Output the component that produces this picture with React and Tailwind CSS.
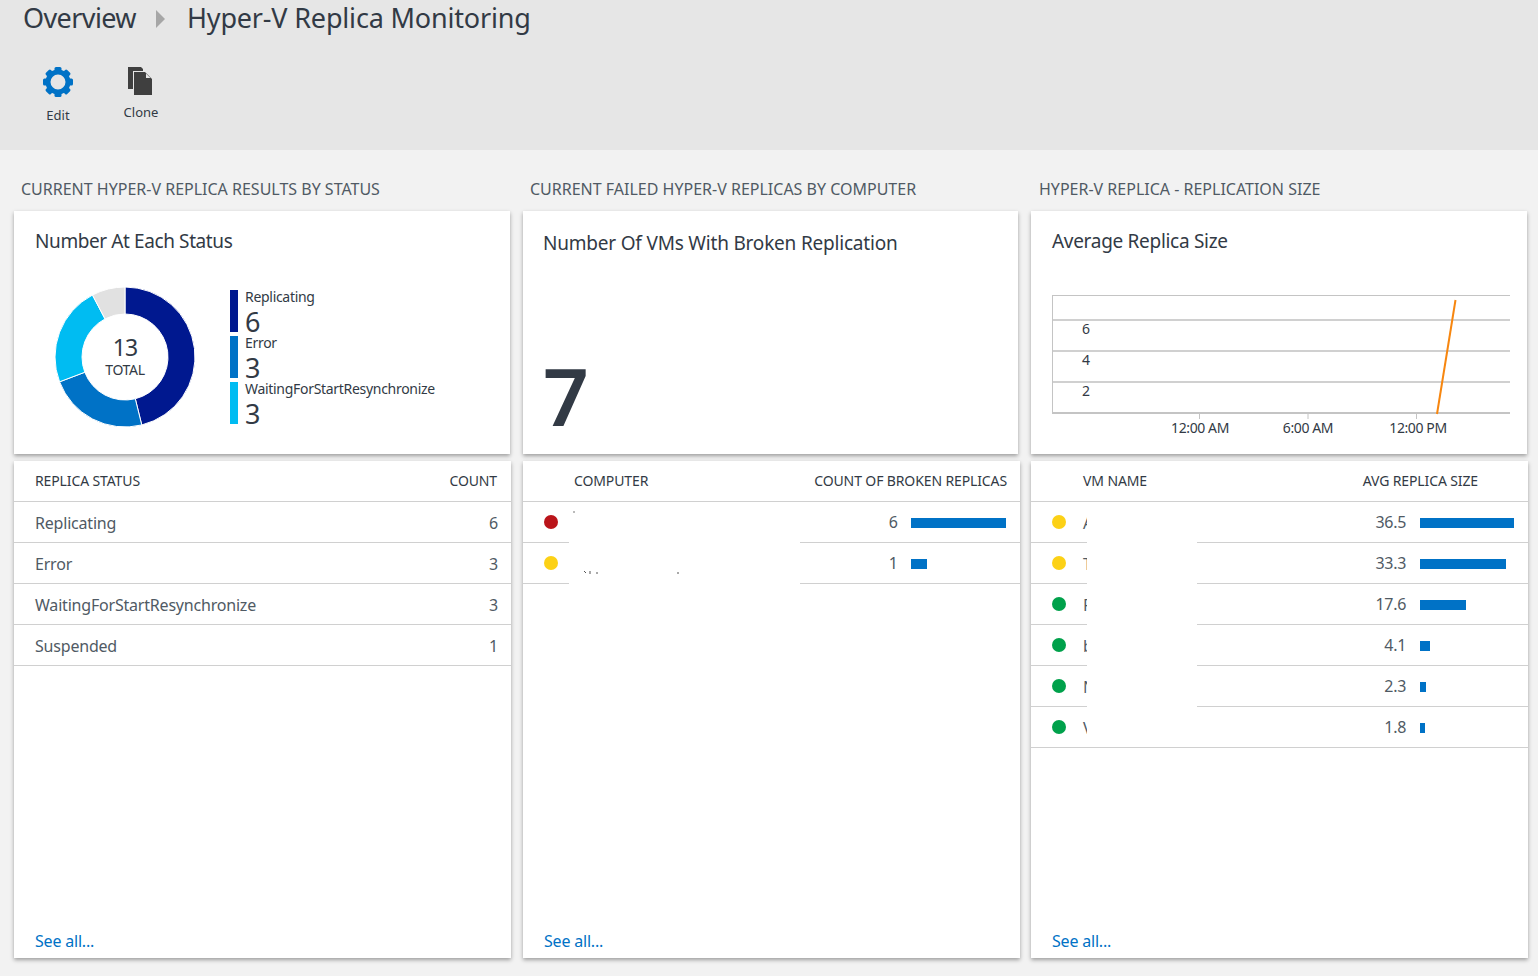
import React from 'react';

const font = { fontFamily: '"Noto Sans", "Open Sans", sans-serif' };

const statusRows = [
  ['Replicating', '6'],
  ['Error', '3'],
  ['WaitingForStartResynchronize', '3'],
  ['Suspended', '1'],
];

const computerRows = [
  { dot: 'bg-[#ba141a]', value: '6', bar: 'w-[95px]' },
  { dot: 'bg-[#fcd116]', value: '1', bar: 'w-[16px]' },
];

const vmRows = [
  { dot: 'bg-[#fcd116]', name: 'A', value: '36.5', bar: 'w-[94px]' },
  { dot: 'bg-[#fcd116]', name: 'T', value: '33.3', bar: 'w-[86px]' },
  { dot: 'bg-[#00a14b]', name: 'F', value: '17.6', bar: 'w-[46px]' },
  { dot: 'bg-[#00a14b]', name: 'b', value: '4.1', bar: 'w-[10px]' },
  { dot: 'bg-[#00a14b]', name: 'N', value: '2.3', bar: 'w-[6px]' },
  { dot: 'bg-[#00a14b]', name: 'V', value: '1.8', bar: 'w-[5px]' },
];

const segments = [
  { value: 6, color: '#00188f' },
  { value: 3, color: '#0072c6' },
  { value: 3, color: '#00bcf2' },
  { value: 1, color: '#e1e1e1' },
];

function arcPath(start, end, r, R) {
  const pt = (rad, a) => [70 + rad * Math.sin(a), 70 - rad * Math.cos(a)];
  const [x1, y1] = pt(R, start);
  const [x2, y2] = pt(R, end);
  const [x3, y3] = pt(r, end);
  const [x4, y4] = pt(r, start);
  const large = end - start > Math.PI ? 1 : 0;
  return `M${x1} ${y1}A${R} ${R} 0 ${large} 1 ${x2} ${y2}L${x3} ${y3}A${r} ${r} 0 ${large} 0 ${x4} ${y4}Z`;
}

function Donut() {
  let angle = 0;
  return (
    <div className="relative w-[140px] h-[140px]">
      <svg width="140" height="140" viewBox="0 0 140 140">
        {segments.map((s) => {
          const start = angle;
          angle += (s.value / 13) * Math.PI * 2;
          return <path key={s.color} d={arcPath(start, angle, 43, 70)} fill={s.color} stroke="#fff" strokeWidth="1" />;
        })}
      </svg>
      <div className="absolute inset-0 flex flex-col items-center justify-center text-[#323a45] -mt-[4px]">
        <span className="text-[23px] leading-[28px] tracking-[-1px] mt-[2px]">13</span>
        <span className="text-[14px] leading-[18px] tracking-[-0.3px]">TOTAL</span>
      </div>
    </div>
  );
}

function LegendItem({ color, label, value }) {
  return (
    <div className="flex h-[42px] gap-[7px]">
      <div className={`w-[8px] h-[42px] ${color}`} />
      <div className="flex flex-col text-[#323a45]">
        <span className="text-[14px] leading-[14px] tracking-[-0.3px]">{label}</span>
        <span className="text-[27px] leading-[26px] mt-[5px]">{value}</span>
      </div>
    </div>
  );
}

function LineChart() {
  return (
    <svg width="470" height="150" viewBox="0 0 470 150" className="block">
      <g stroke="#d0d0d0" strokeWidth="2">
        <line x1="0" y1="29" x2="458" y2="29" />
        <line x1="0" y1="60" x2="458" y2="60" />
        <line x1="0" y1="91" x2="458" y2="91" />
      </g>
      <line x1="0" y1="4.5" x2="458" y2="4.5" stroke="#c4c4c4" strokeWidth="1" />
      <line x1="0.5" y1="4" x2="0.5" y2="123" stroke="#c4c4c4" strokeWidth="1" />
      <line x1="0" y1="122" x2="458" y2="122" stroke="#c4c4c4" strokeWidth="2" />
      <g stroke="#c4c4c4" strokeWidth="1">
        <line x1="147.5" y1="123" x2="147.5" y2="128" />
        <line x1="256" y1="123" x2="256" y2="128" />
        <line x1="364.5" y1="123" x2="364.5" y2="128" />
      </g>
      <line x1="385" y1="123" x2="403.5" y2="9" stroke="#f7860f" strokeWidth="2" />
      <g fill="#323a45" fontSize="14" style={font}>
        <text x="30" y="43">6</text>
        <text x="30" y="74">4</text>
        <text x="30" y="105">2</text>
      </g>
      <g fill="#323a45" fontSize="14" textAnchor="middle" letterSpacing="-0.4" style={font}>
        <text x="148" y="142">12:00 AM</text>
        <text x="256" y="142">6:00 AM</text>
        <text x="366" y="142">12:00 PM</text>
      </g>
    </svg>
  );
}

function GearIcon() {
  const angles = [0, 45, 90, 135, 180, 225, 270, 315];
  return (
    <svg width="32" height="32" viewBox="0 0 32 32">
      <g fill="#0072c6">
        {angles.map((a) => (
          <rect key={a} x="12.5" y="1" width="7" height="7" rx="1.5" transform={`rotate(${a} 16 16)`} />
        ))}
      </g>
      <circle cx="16" cy="16" r="10" fill="none" stroke="#0072c6" strokeWidth="5" />
    </svg>
  );
}

function CloneIcon() {
  return (
    <svg width="32" height="30" viewBox="0 0 32 30">
      <path d="M3 2H16L18 4V6H8V24H3Z" fill="#3f3f3f" />
      <path d="M9 7H20L27 14V30H9Z" fill="#3f3f3f" />
      <path d="M21 8.5L25.5 13H21Z" fill="#e6e6e6" />
    </svg>
  );
}

function Card({ className = '', children }) {
  return (
    <div className={`bg-white shadow-[0_2px_4px_rgba(0,0,0,0.35)] ${className}`}>{children}</div>
  );
}

function SeeAll() {
  return (
    <a className="absolute left-[21px] bottom-[6px] text-[16px] leading-[22px] text-[#0072c6] tracking-[-0.2px]">See all...</a>
  );
}

function HeadCell({ className = '', children }) {
  return <span className={`text-[14px] leading-[20px] text-[#323a45] tracking-[-0.12px] ${className}`}>{children}</span>;
}

function Row({ children }) {
  return <div className="h-[41px] flex items-center border-b border-[#d0d0d0]">{children}</div>;
}

export default function App() {
  return (
    <div className="w-[1538px] h-[976px] overflow-hidden bg-[#f2f2f2]" style={font}>
      {/* Top bar */}
      <header className="h-[150px] bg-[#e6e6e6]">
        <div className="h-[36px] flex items-center pl-[23px] text-[27px] text-[#323a45]">
          <span className="tracking-[-0.6px]">Overview</span>
          <svg width="10" height="18" viewBox="0 0 10 18" className="ml-[20px] mr-[21px] mt-[2px]">
            <path d="M0 0L9 9L0 18Z" fill="#a6a6a6" />
          </svg>
          <span className="tracking-[-0.18px]">Hyper-V Replica Monitoring</span>
        </div>
        <div className="flex pl-[38px] pt-[30px]">
          <div className="flex flex-col items-center w-[40px]">
            <GearIcon />
            <span className="text-[13px] leading-[18px] mt-[8px] text-[#323a45]">Edit</span>
          </div>
          <div className="flex flex-col items-center w-[40px] ml-[43px] -mt-[1px]">
            <CloneIcon />
            <span className="text-[13px] leading-[18px] mt-[8px] text-[#323a45]">Clone</span>
          </div>
        </div>
      </header>

      <main className="flex pl-[14px]">
        {/* Status column */}
        <section className="w-[497px] mr-[12px]">
          <h2 className="h-[61px] pt-[27px] pl-[7px] text-[16px] leading-[24px] text-[#505a64]">CURRENT HYPER-V REPLICA RESULTS BY STATUS</h2>
          <Card className="h-[243px] w-[496px] pl-[21px] pt-[18px]">
            <h3 className="text-[19px] leading-[25px] text-[#323a45] tracking-[-0.4px]">Number At Each Status</h3>
            <div className="flex mt-[33px] pl-[20px]">
              <Donut />
              <div className="ml-[35px] mt-[3px] flex flex-col gap-[4px]">
                <LegendItem color="bg-[#00188f]" label="Replicating" value="6" />
                <LegendItem color="bg-[#0072c6]" label="Error" value="3" />
                <LegendItem color="bg-[#00bcf2]" label="WaitingForStartResynchronize" value="3" />
              </div>
            </div>
          </Card>
          <Card className="relative h-[497px] mt-[7px]">
            <div className="h-[41px] flex items-center justify-between pl-[21px] pr-[14px] border-b border-[#d0d0d0]">
              <HeadCell>REPLICA STATUS</HeadCell>
              <HeadCell>COUNT</HeadCell>
            </div>
            {statusRows.map(([label, count]) => (
              <Row key={label}>
                <div className="flex-1 flex justify-between pl-[21px] pr-[13px] pt-[1px] text-[16px] text-[#505a64] tracking-[-0.2px]">
                  <span>{label}</span>
                  <span>{count}</span>
                </div>
              </Row>
            ))}
            <SeeAll />
          </Card>
        </section>

        {/* Failed replicas column */}
        <section className="w-[497px] mr-[11px]">
          <h2 className="h-[61px] pt-[27px] pl-[7px] text-[16px] leading-[24px] text-[#505a64]">CURRENT FAILED HYPER-V REPLICAS BY COMPUTER</h2>
          <Card className="h-[243px] w-[495px] pl-[20px] pt-[20px]">
            <h3 className="text-[19px] leading-[25px] text-[#323a45] tracking-[-0.2px]">Number Of VMs With Broken Replication</h3>
            <div className="text-[80px] leading-[80px] mt-[99px] text-[#323a45] font-semibold">7</div>
          </Card>
          <Card className="relative h-[497px] mt-[7px]">
            <div className="h-[41px] flex items-center justify-between pl-[51px] pr-[13px] border-b border-[#d0d0d0]">
              <HeadCell>COMPUTER</HeadCell>
              <HeadCell>COUNT OF BROKEN REPLICAS</HeadCell>
            </div>
            {computerRows.map((r) => (
              <Row key={r.value}>
                <div className={`w-[14px] h-[14px] rounded-full ml-[21px] ${r.dot}`} />
                <span className="ml-auto -mr-[1px] text-[16px] text-[#505a64]">{r.value}</span>
                <div className="w-[123px] pl-[14px]">
                  <div className={`h-[10px] mt-[2px] bg-[#0072c6] ${r.bar}`} />
                </div>
              </Row>
            ))}
            {/* Redacted names, with the few glyph tips that show past the mask */}
            <div className="absolute left-[46px] top-[41px] w-[231px] h-[82px] bg-white">
              <svg width="231" height="82" viewBox="0 0 231 82">
                <path d="M5 9V11" stroke="#777" strokeWidth="1" />
                <path d="M15 69L17 71M21 69V72M28 70V72M109 70V72" stroke="#555" strokeWidth="1" />
              </svg>
            </div>
            <SeeAll />
          </Card>
        </section>

        {/* Replica size column */}
        <section className="w-[497px]">
          <h2 className="h-[61px] pt-[27px] pl-[8px] text-[16px] leading-[24px] text-[#505a64]">HYPER-V REPLICA - REPLICATION SIZE</h2>
          <Card className="h-[243px] w-[496px] pl-[21px] pt-[18px]">
            <h3 className="text-[19px] leading-[25px] text-[#323a45] tracking-[-0.3px]">Average Replica Size</h3>
            <div className="mt-[37px]">
              <LineChart />
            </div>
          </Card>
          <Card className="relative h-[497px] mt-[7px]">
            <div className="h-[41px] flex items-center pl-[52px] border-b border-[#d0d0d0]">
              <HeadCell>VM NAME</HeadCell>
              <HeadCell className="ml-auto mr-[50px]">AVG REPLICA SIZE</HeadCell>
            </div>
            {vmRows.map((r) => (
              <Row key={r.name}>
                <div className={`w-[14px] h-[14px] rounded-full ml-[21px] ${r.dot}`} />
                <span className="ml-[17px] pt-[1px] text-[16px] text-[#505a64]">{r.name}</span>
                <span className="ml-auto text-[16px] text-[#505a64] tracking-[-0.3px]">{r.value}</span>
                <div className="w-[122px] pl-[14px]">
                  <div className={`h-[10px] mt-[2px] bg-[#0072c6] ${r.bar}`} />
                </div>
              </Row>
            ))}
            {/* Redacted names */}
            <div className="absolute left-[56px] top-[41px] w-[110px] h-[245px] bg-white" />
            <SeeAll />
          </Card>
        </section>
      </main>
    </div>
  );
}
